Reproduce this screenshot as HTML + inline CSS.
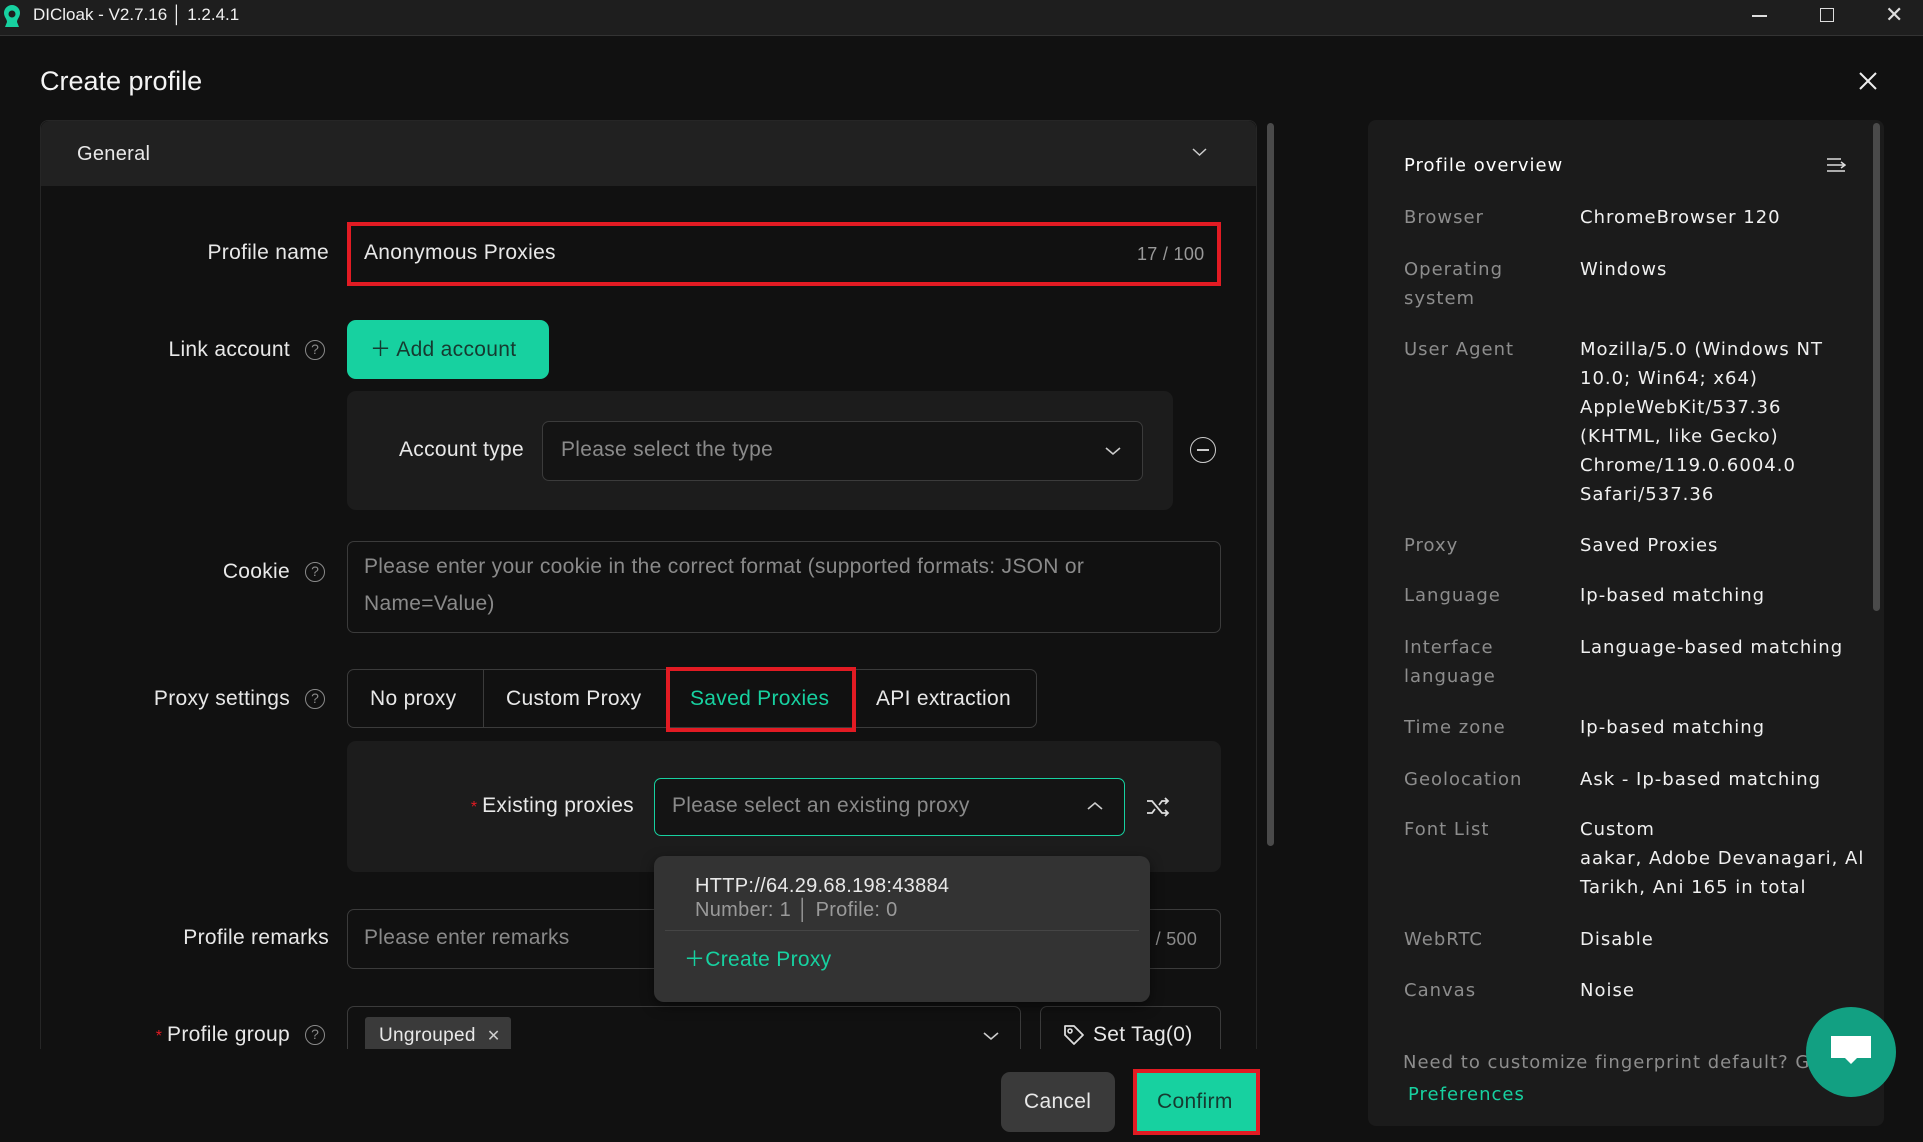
<!DOCTYPE html>
<html><head><meta charset="utf-8"><style>
*{margin:0;padding:0;box-sizing:border-box}
body{width:1923px;height:1142px;background:#111111;overflow:hidden;position:relative;font-family:"Liberation Sans",sans-serif;color:#e8e8e8}
.a{position:absolute;white-space:nowrap}
.t{position:absolute;white-space:nowrap;font-size:21px;line-height:28px;height:28px;letter-spacing:0.3px}
.r{text-align:right}
.box{position:absolute;border:1px solid #3b3b3b;border-radius:7px}
.ph{color:#8a8a8a}
.help{position:absolute;width:20px;height:20px;border:1.5px solid #8a8a8a;border-radius:50%;color:#8a8a8a;font-size:14px;line-height:17px;text-align:center}
.rp{position:absolute;font-family:"DejaVu Sans",sans-serif;font-size:18px;line-height:29px;white-space:nowrap;letter-spacing:1px}
.lb{color:#8d8d8d;left:1404px}
.vl{color:#f0f0f0;left:1580px}
</style></head><body>
<div class="a" style="left:0;top:0;width:1923px;height:36px;background:#1e1e1e;border-bottom:1px solid #333"></div>
<svg class="a" style="left:2px;top:4px" width="20" height="24" viewBox="0 0 20 24"><path d="M10 1a8 8 0 0 0-8 8c0 4 3 6 3 9l-2 5h14l-2-5c0-3 3-5 3-9a8 8 0 0 0-8-8z" fill="#17d1a0"/><circle cx="10" cy="10" r="3.5" fill="#1e1e1e"/></svg>
<div class="a" style="left:33px;top:4px;font-size:17px;line-height:22px;color:#f0f0f0">DICloak - V2.7.16 │ 1.2.4.1</div>
<div class="a" style="left:1752px;top:15px;width:15px;height:1.5px;background:#ddd"></div>
<div class="a" style="left:1820px;top:8px;width:14px;height:14px;border:1.5px solid #ddd"></div>
<div class="a" style="left:1885px;top:2px;font-size:22px;color:#ddd">✕</div>

<div class="a" style="left:40px;top:64px;font-size:27px;line-height:34px;color:#f4f4f4">Create profile</div>
<svg class="a" style="left:1858px;top:71px" width="20" height="20"><path d="M2 2l16 16M18 2L2 18" stroke="#eee" stroke-width="2"/></svg>

<div class="a" style="left:40px;top:120px;width:1217px;height:960px;border:1px solid #262626;border-radius:8px 8px 0 0;background:#111"></div>
<div class="a" style="left:41px;top:121px;width:1215px;height:65px;background:#212121;border-radius:8px 8px 0 0"></div>
<div class="t" style="left:77px;top:140px;font-size:20px">General</div>
<svg class="a" style="left:1192px;top:147px" width="15" height="10"><path d="M1 2l6.5 6 6.5-6" stroke="#ccc" stroke-width="1.5" fill="none"/></svg>
<div class="a" style="left:1267px;top:123px;width:7px;height:723px;background:#4a4a4a;border-radius:4px"></div>

<div class="t r" style="left:130px;width:199px;top:239px">Profile name</div>
<div class="a" style="left:347px;top:222px;width:874px;height:64px;border:4px solid #e21b23;background:#111"></div>
<div class="t" style="left:364px;top:239px">Anonymous Proxies</div>
<div class="t" style="left:1137px;top:240px;font-size:18px;color:#999">17 / 100</div>

<div class="t r" style="left:100px;width:190px;top:336px">Link account</div>
<div class="help" style="left:305px;top:340px">?</div>
<div class="a" style="left:347px;top:320px;width:202px;height:59px;background:#17d1a0;border-radius:9px"></div>
<div class="t" style="left:370px;top:336px;color:#163a30">＋ Add account</div>

<div class="a" style="left:347px;top:391px;width:826px;height:119px;background:#1c1c1c;border-radius:9px"></div>
<div class="t r" style="left:360px;width:164px;top:436px">Account type</div>
<div class="box" style="left:542px;top:421px;width:601px;height:60px;background:#141414"></div>
<div class="t ph" style="left:561px;top:436px">Please select the type</div>
<svg class="a" style="left:1105px;top:446px" width="16" height="10"><path d="M1 2l7 6 7-6" stroke="#ccc" stroke-width="1.6" fill="none"/></svg>
<div class="a" style="left:1190px;top:437px;width:26px;height:26px;border:1.8px solid #ccc;border-radius:50%"></div>
<div class="a" style="left:1197px;top:449px;width:12px;height:2px;background:#ccc"></div>

<div class="t r" style="left:150px;width:140px;top:558px">Cookie</div>
<div class="help" style="left:305px;top:562px">?</div>
<div class="box" style="left:347px;top:541px;width:874px;height:92px"></div>
<div class="t ph" style="left:364px;top:553px">Please enter your cookie in the correct format (supported formats: JSON or</div>
<div class="t ph" style="left:364px;top:590px">Name=Value)</div>

<div class="t r" style="left:100px;width:190px;top:685px">Proxy settings</div>
<div class="help" style="left:305px;top:689px">?</div>
<div class="box" style="left:347px;top:669px;width:690px;height:59px"></div>
<div class="a" style="left:483px;top:669px;width:1px;height:59px;background:#3b3b3b"></div>
<div class="a" style="left:855px;top:669px;width:1px;height:59px;background:#3b3b3b"></div>
<div class="t" style="left:370px;top:685px">No proxy</div>
<div class="t" style="left:506px;top:685px">Custom Proxy</div>
<div class="a" style="left:666px;top:667px;width:190px;height:65px;border:4px solid #e21b23"></div>
<div class="t" style="left:690px;top:685px;color:#17d1a0">Saved Proxies</div>
<div class="t" style="left:876px;top:685px">API extraction</div>

<div class="a" style="left:347px;top:741px;width:874px;height:131px;background:#1c1c1c;border-radius:9px"></div>
<div class="t r" style="left:440px;width:194px;top:792px"><span style="color:#e21b23;font-size:16px">* </span>Existing proxies</div>
<div class="a" style="left:654px;top:778px;width:471px;height:58px;border:1.5px solid #17d1a0;border-radius:7px;background:#141414"></div>
<div class="t ph" style="left:672px;top:792px">Please select an existing proxy</div>
<svg class="a" style="left:1087px;top:801px" width="16" height="10"><path d="M1 8l7-6 7 6" stroke="#ccc" stroke-width="1.6" fill="none"/></svg>
<svg class="a" style="left:1146px;top:796px" width="24" height="22" viewBox="0 0 24 22"><path d="M1 5h5l10 12h6M1 17h5l3-4M13 9l3-4h6M19 2l3 3-3 3M19 14l3 3-3 3" stroke="#ddd" stroke-width="1.8" fill="none"/></svg>

<div class="t r" style="left:120px;width:209px;top:924px">Profile remarks</div>
<div class="box" style="left:347px;top:909px;width:874px;height:60px"></div>
<div class="t ph" style="left:364px;top:924px">Please enter remarks</div>
<div class="t ph" style="left:1140px;top:925px;font-size:18px">0 / 500</div>

<div class="t r" style="left:100px;width:190px;top:1021px"><span style="color:#e21b23;font-size:16px">* </span>Profile group</div>
<div class="help" style="left:305px;top:1025px">?</div>
<div class="a" style="left:347px;top:1006px;width:674px;height:60px;border:1px solid #3b3b3b;border-radius:7px"></div>
<div class="a" style="left:365px;top:1017px;width:146px;height:40px;background:#3a3a3a;border-radius:3px"></div>
<div class="t" style="left:379px;top:1022px;font-size:19px">Ungrouped&nbsp;&nbsp;<span style="font-size:16px;color:#ccc">✕</span></div>
<svg class="a" style="left:983px;top:1031px" width="16" height="10"><path d="M1 2l7 6 7-6" stroke="#ccc" stroke-width="1.6" fill="none"/></svg>
<div class="a" style="left:1040px;top:1006px;width:181px;height:60px;border:1px solid #3b3b3b;border-radius:7px"></div>
<svg class="a" style="left:1062px;top:1023px" width="24" height="24" viewBox="0 0 24 24"><path d="M3 3h9l9 9-9 9-9-9z" stroke="#ddd" stroke-width="1.8" fill="none" stroke-linejoin="round"/><circle cx="8" cy="8" r="2" stroke="#ddd" stroke-width="1.6" fill="none"/></svg>
<div class="t" style="left:1093px;top:1021px">Set Tag(0)</div>

<div class="a" style="left:0;top:1049px;width:1340px;height:93px;background:#111"></div>
<div class="a" style="left:1001px;top:1072px;width:114px;height:60px;background:#3a3a3a;border-radius:9px"></div>
<div class="t" style="left:1024px;top:1088px">Cancel</div>
<div class="a" style="left:1133px;top:1069px;width:127px;height:66px;border:4px solid #e21b23;background:#17d1a0"></div>
<div class="t" style="left:1157px;top:1088px;color:#163a30">Confirm</div>

<div class="a" style="left:654px;top:856px;width:496px;height:146px;background:#333;border-radius:10px;box-shadow:0 4px 12px rgba(0,0,0,.5)"></div>
<div class="t" style="left:695px;top:872px;font-size:20px">HTTP://64.29.68.198:43884</div>
<div class="t" style="left:695px;top:896px;font-size:20px;color:#9a9a9a">Number: 1 │ Profile: 0</div>
<div class="a" style="left:665px;top:930px;width:474px;height:1px;background:#454545"></div>
<div class="t" style="left:684px;top:946px;color:#17d1a0">＋Create Proxy</div>

<div class="a" style="left:1368px;top:120px;width:516px;height:1006px;background:#1b1b1b;border-radius:8px"></div>
<div class="a" style="left:1873px;top:123px;width:7px;height:488px;background:#4a4a4a;border-radius:4px"></div>
<div class="rp" style="left:1404px;top:151px;color:#fff">Profile overview</div>
<svg class="a" style="left:1826px;top:157px" width="20" height="16"><path d="M1 2h14M1 8h18M1 14h18M15 5l4 3-4 3" stroke="#ddd" stroke-width="1.5" fill="none"/></svg>
<div class="rp lb" style="top:203px">Browser</div><div class="rp vl" style="top:203px">ChromeBrowser 120</div>
<div class="rp lb" style="top:255px">Operating<br>system</div><div class="rp vl" style="top:255px">Windows</div>
<div class="rp lb" style="top:335px">User Agent</div><div class="rp vl" style="top:335px">Mozilla/5.0 (Windows NT<br>10.0; Win64; x64)<br>AppleWebKit/537.36<br>(KHTML, like Gecko)<br>Chrome/119.0.6004.0<br>Safari/537.36</div>
<div class="rp lb" style="top:531px">Proxy</div><div class="rp vl" style="top:531px">Saved Proxies</div>
<div class="rp lb" style="top:581px">Language</div><div class="rp vl" style="top:581px">Ip-based matching</div>
<div class="rp lb" style="top:633px">Interface<br>language</div><div class="rp vl" style="top:633px">Language-based matching</div>
<div class="rp lb" style="top:713px">Time zone</div><div class="rp vl" style="top:713px">Ip-based matching</div>
<div class="rp lb" style="top:765px">Geolocation</div><div class="rp vl" style="top:765px">Ask - Ip-based matching</div>
<div class="rp lb" style="top:815px">Font List</div><div class="rp vl" style="top:815px">Custom<br>aakar, Adobe Devanagari, Al<br>Tarikh, Ani 165 in total</div>
<div class="rp lb" style="top:925px">WebRTC</div><div class="rp vl" style="top:925px">Disable</div>
<div class="rp lb" style="top:976px">Canvas</div><div class="rp vl" style="top:976px">Noise</div>
<div class="rp" style="left:1403px;top:1048px;color:#8d8d8d">Need to customize fingerprint default? Go</div>
<div class="rp" style="left:1408px;top:1080px;color:#17d1a0">Preferences</div>
<div class="a" style="left:1806px;top:1007px;width:90px;height:90px;background:#12a082;border-radius:50%"></div>
<svg class="a" style="left:1829px;top:1033px" width="44" height="34" viewBox="0 0 44 34"><path d="M2 3h40v22H28l-6 6-6-6H2z" fill="#fff"/></svg>
</body></html>
